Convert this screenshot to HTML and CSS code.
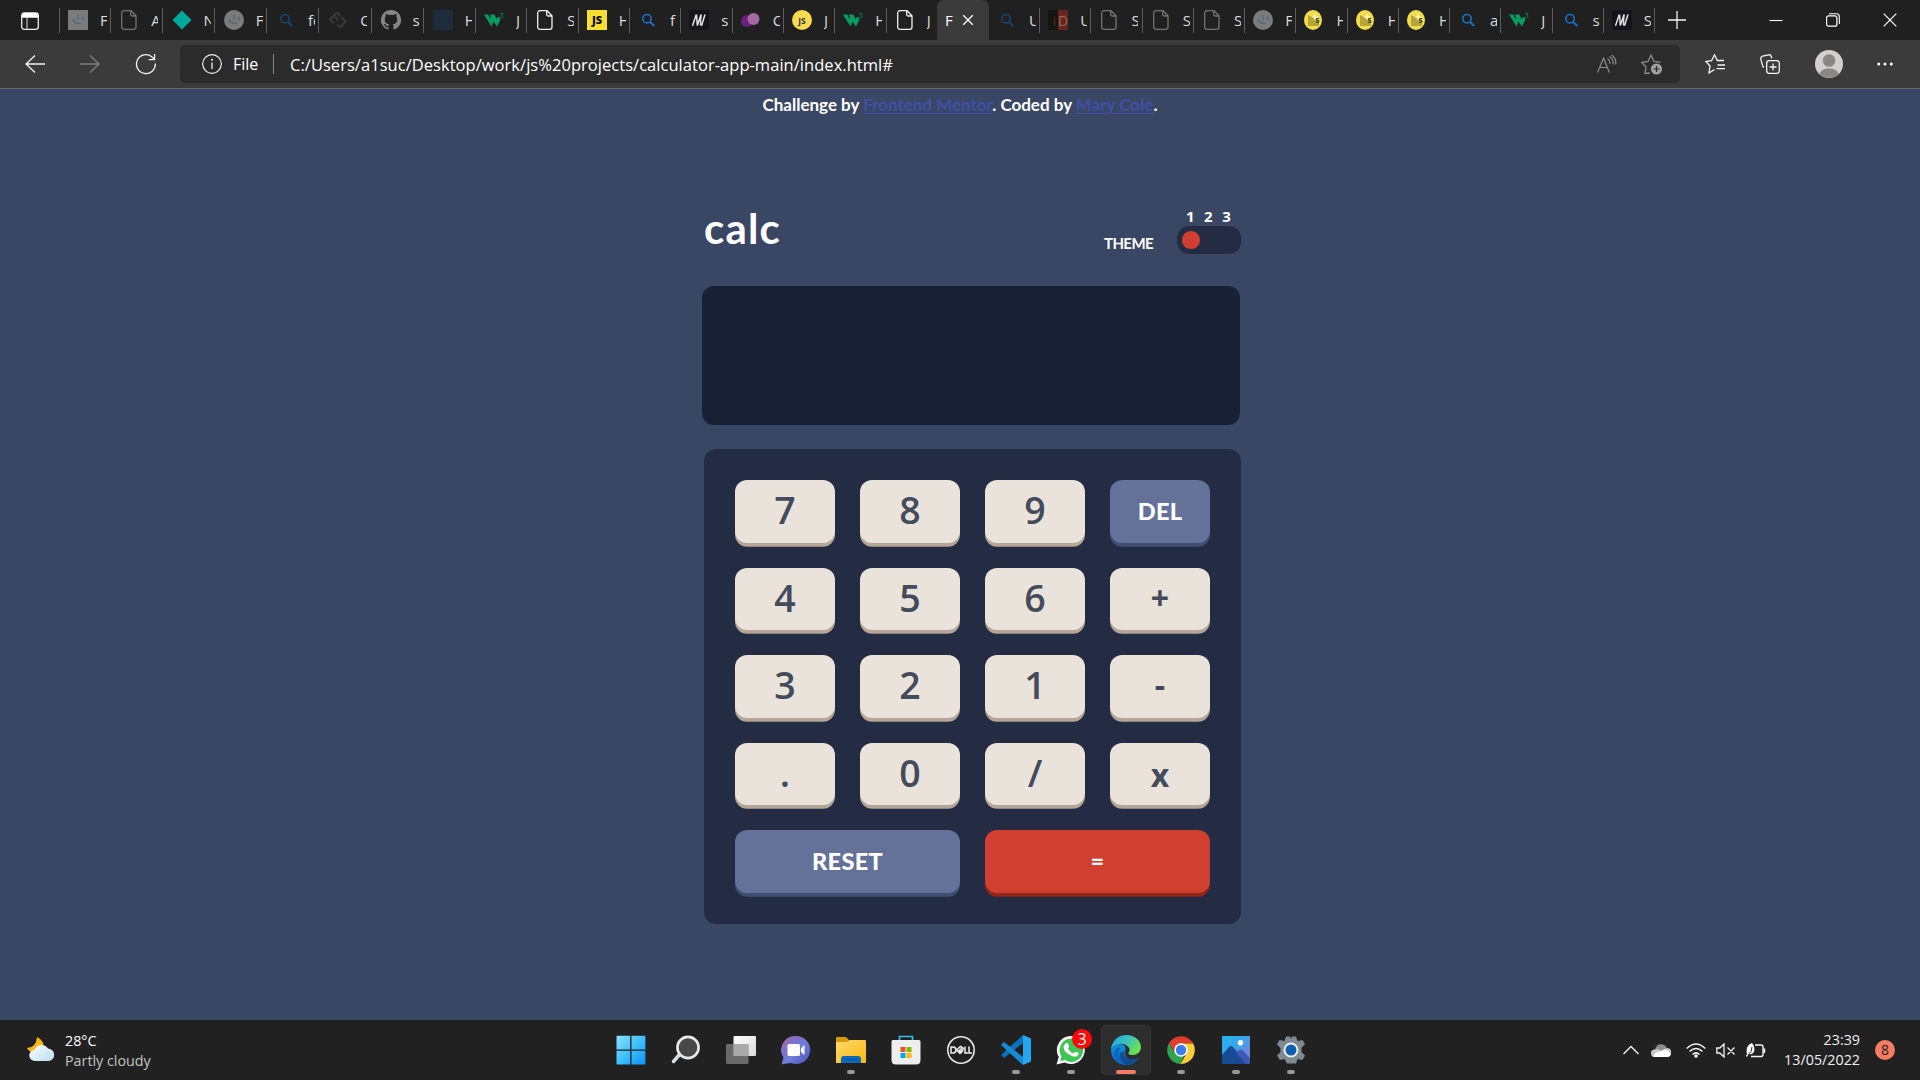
FILE: index.html
```
<!DOCTYPE html>
<html lang="en">
<head>
<meta charset="utf-8">
<title>Frontend Mentor | Calculator app</title>
<link rel="stylesheet" href="styles.css">
</head>
<body>
<svg class="defs" width="0" height="0" aria-hidden="true">
  <defs>
    <linearGradient id="g-win" x1="0" y1="0" x2="1" y2="1"><stop offset="0" stop-color="#8be2ff"/><stop offset=".5" stop-color="#3fc0fb"/><stop offset="1" stop-color="#0a94f5"/></linearGradient>
    <linearGradient id="g-chat" x1="0" y1="0" x2="1" y2="1"><stop offset="0" stop-color="#b0689c"/><stop offset=".35" stop-color="#7a72cf"/><stop offset=".55" stop-color="#6d80dc"/><stop offset="1" stop-color="#4a4bb8"/></linearGradient>
    <linearGradient id="g-folder" x1="0" y1="0" x2="1" y2="1"><stop offset="0" stop-color="#ffd96a"/><stop offset="1" stop-color="#fcb912"/></linearGradient>
    <linearGradient id="g-view" x1="0" y1="0" x2="1" y2="1"><stop offset="0" stop-color="#fff"/><stop offset="1" stop-color="#d9d9d9"/></linearGradient>
    <linearGradient id="g-edge1" x1="0" y1="0" x2="1" y2=".5"><stop offset="0" stop-color="#239cd8"/><stop offset=".5" stop-color="#35c1c8"/><stop offset="1" stop-color="#6be04c"/></linearGradient>
    <linearGradient id="g-edge2" x1="0" y1="0" x2="0" y2="1"><stop offset="0" stop-color="#0e8fd8"/><stop offset="1" stop-color="#1767c4"/></linearGradient>
    <linearGradient id="g-photo" x1="0" y1="0" x2="1" y2="1"><stop offset="0" stop-color="#22b3ee"/><stop offset=".45" stop-color="#3ba4ea"/><stop offset="1" stop-color="#9a6cd0"/></linearGradient>
    <linearGradient id="g-cloud" x1="0" y1="0" x2="1" y2="1"><stop offset="0" stop-color="#fafdff"/><stop offset="1" stop-color="#b9ddf2"/></linearGradient>
    <symbol id="i-page" viewBox="0 0 20 20"><path d="M4 .7h8l5 5V17a2.300 2.300 0 0 1-2.300 2.300H5A2.300 2.300 0 0 1 2.700 17V3A2.300 2.300 0 0 1 5 .7M11.700 1v3.500A1.500 1.500 0 0 0 13.200 6H17" fill="none" stroke="currentColor" stroke-width="1.300"/></symbol>
    <symbol id="i-find" viewBox="0 0 20 20"><circle cx="9" cy="8.700" r="4.200" fill="none" stroke="currentColor" stroke-width="1.600"/><path d="M12 12l4.300 4" stroke="currentColor" stroke-width="2"/></symbol>
    <symbol id="i-w3" viewBox="0 0 20 20"><path d="M0 4.500h4.300l2 4.500L7 7.500 6 4.500h4.300l2.200 4.500 1.500-2h2l-.5 1.500 1 1L13 16.500 9.500 11.500 7.500 16.500z" fill="#059c66"/><path d="M16.200 3.500h2.800l-1.500 1.700q1.800.2 1.300 1.800-.7 1.500-2.800.7" fill="none" stroke="#087a50" stroke-width="1"/></symbol>
    <symbol id="i-js" viewBox="0 0 20 20"><path d="M0 0h20v20H0z" fill="#f8df31"/><text x="10" y="14" text-anchor="middle" class="fav-js">JS</text></symbol>
    <symbol id="i-jsc" viewBox="0 0 20 20"><circle cx="10" cy="10" r="10" fill="#f8da50"/><text x="10" y="13.500" text-anchor="middle" class="fav-jsc">JS</text></symbol>
    <symbol id="i-m" viewBox="0 0 20 20"><path d="M0 0h20v20H0z" fill="#15141a"/><path d="M3.500 15.700L7.300 4.500M7.500 4.500L8.300 15.500 12 4.500M12.200 4.500q-1 6-.7 11M12.500 15.700L16 4.500" fill="none" stroke="#e2e2e4" stroke-width="1.500"/></symbol>
    <symbol id="i-face" viewBox="0 0 20 20"><circle cx="10" cy="10" r="10" fill="#7b7b7b"/><path d="M5 9q1 5 8 4.500M10 5v5M16 7l-2 1.500 2 1.500" fill="none" stroke="#56677a" stroke-width="1.300"/></symbol>
    <symbol id="i-yellow" viewBox="0 0 20 20"><ellipse cx="9" cy="10" rx="9" ry="10" fill="#f0dc4c"/><path d="M4 5l11 6v5H4z" fill="#b5a638"/><path d="M11 4v6M8.500 7H14" stroke="#fff8c8" stroke-width="1.300"/><text x="11.500" y="13" class="fav-s">s</text></symbol>
  </defs>
</svg>

<header class="tabstrip">
  <div class="tab-actions"><svg width="18" height="18" viewBox="0 0 18 18"><rect x=".7" y=".9" width="16.600" height="16.400" rx="2.500" fill="none" stroke="#eee" stroke-width="1.300"/><path d="M1 4Q1 1 4 1h10q3 0 3 3v1.700H1z" fill="#fff"/><path d="M6 5v12" stroke="#ddd"/></svg></div>
  <div class="tabs group-a">
    <div class="tab"><svg><path d="M0 0h20v20H0z" fill="#7b7b7b"/><path d="M5 9q1 5 8 4.500M10 5v5M16 7l-2 1.500 2 1.500" fill="none" stroke="#56677a" stroke-width="1.300"/></svg><span>F</span></div>
    <div class="tab dim"><svg><use href="#i-page"/></svg><span>A</span></div>
    <div class="tab"><svg><path d="M10 .5l9.500 9.500-9.500 9.500L.5 10z" fill="#00a99d"/></svg><span>N</span></div>
    <div class="tab"><svg><use href="#i-face"/></svg><span>F</span></div>
    <div class="tab navy"><svg><use href="#i-find"/></svg><span>fo</span></div>
    <div class="tab"><svg><path d="M9 2.500L2 9.500l4 4M12 17.500l5.500-6-4.500-4.500M7 7l3.500 3.500M9 2.500l3 3M9 14.500l3 3" fill="none" stroke="#3a3a3a" stroke-width="2"/></svg><span>C</span></div>
    <div class="tab"><svg><path fill="#868686" d="M10 0a10 10 0 0 0-3.200 19.500c.5.100.7-.2.700-.5v-1.800c-2.800.6-3.400-1.300-3.400-1.300-.4-1.200-1.100-1.500-1.100-1.500-.9-.6.100-.6.100-.6 1 .1 1.500 1 1.500 1 .9 1.600 2.400 1.100 3 .9.100-.7.400-1.100.6-1.400-2.200-.3-4.500-1.100-4.500-5 0-1.100.4-2 1-2.700-.1-.2-.4-1.200.1-2.600 0 0 .8-.3 2.700 1a9.400 9.400 0 0 1 5 0c1.900-1.300 2.700-1 2.700-1 .5 1.400.2 2.400.1 2.600.6.700 1 1.600 1 2.700 0 3.900-2.300 4.700-4.500 5 .4.300.7.900.7 1.900V19c0 .3.200.6.700.5A10 10 0 0 0 10 0z"/></svg><span>s</span></div>
    <div class="tab"><svg><path d="M0 0h20v20H0z" fill="#1f2a3b"/></svg><span>H</span></div>
  </div>
  <div class="tabs group-b">
    <div class="tab"><svg><use href="#i-w3"/></svg><span>J</span></div>
    <div class="tab"><svg><use href="#i-page"/></svg><span>S</span></div>
    <div class="tab"><svg><use href="#i-js"/></svg><span>H</span></div>
    <div class="tab blue"><svg><use href="#i-find"/></svg><span>f</span></div>
    <div class="tab"><svg><use href="#i-m"/></svg><span>s</span></div>
    <div class="tab"><svg><circle cx="6" cy="11" r="6" fill="#68217a"/><circle cx="12.500" cy="9" r="6" fill="#a66aa3"/></svg><span>C</span></div>
    <div class="tab"><svg><use href="#i-jsc"/></svg><span>J</span></div>
    <div class="tab"><svg><use href="#i-w3"/></svg><span>H</span></div>
    <div class="tab last"><svg><use href="#i-page"/></svg><span>J</span></div>
  </div>
  <div class="active-tab"><span>F</span><svg width="10" height="10" viewBox="0 0 10 10"><path d="M0 0l10 10M10 0L0 10" stroke="#fff" stroke-width="1.300"/></svg></div>
  <div class="tabs group-c">
    <div class="tab navy"><svg><use href="#i-find"/></svg><span>U</span></div>
    <div class="tab"><svg><path d="M0 0h10v20H0z" fill="#141414"/><path d="M10 0h10v20H10z" fill="#67261b"/><text x="4.500" y="15.500" class="fav-id">i</text><text x="10" y="15.500" class="fav-d">D</text></svg><span>U</span></div>
    <div class="tab dim"><svg><use href="#i-page"/></svg><span>S</span></div>
    <div class="tab dim"><svg><use href="#i-page"/></svg><span>S</span></div>
    <div class="tab dim"><svg><use href="#i-page"/></svg><span>S</span></div>
    <div class="tab"><svg><use href="#i-face"/></svg><span>F</span></div>
    <div class="tab"><svg><use href="#i-yellow"/></svg><span>H</span></div>
    <div class="tab"><svg><use href="#i-yellow"/></svg><span>H</span></div>
    <div class="tab"><svg><use href="#i-yellow"/></svg><span>H</span></div>
    <div class="tab blue"><svg><use href="#i-find"/></svg><span>a</span></div>
    <div class="tab"><svg><use href="#i-w3"/></svg><span>J</span></div>
    <div class="tab blue"><svg><use href="#i-find"/></svg><span>s</span></div>
    <div class="tab"><svg><use href="#i-m"/></svg><span>S</span></div>
  </div>
  <svg class="new-tab" width="18" height="18" viewBox="0 0 18 18"><path d="M9 0v18M0 9h18" stroke="#f2f2f2" stroke-width="1.300"/></svg>
  <div class="window-buttons">
    <svg width="14" height="14" viewBox="0 0 14 14"><path d="M.5 7.500h13" stroke="#fff" stroke-width="1.100"/></svg>
    <svg width="14" height="14" viewBox="0 0 14 14"><rect x=".6" y="2.900" width="10.300" height="10.300" rx="2" fill="none" stroke="#fff" stroke-width="1.200"/><path d="M3 .7h7.500q2.800 0 2.800 2.800V11" fill="none" stroke="#fff" stroke-width="1.100"/></svg>
    <svg width="14" height="14" viewBox="0 0 14 14"><path d="M.7.7l12.600 12.600M13.300.7L.7 13.300" stroke="#fff" stroke-width="1.200"/></svg>
  </div>
</header>

<nav class="toolbar">
  <div class="nav-buttons">
    <svg width="20" height="20" viewBox="0 0 20 20"><path d="M20 10H1M10 1.500L1 10l9 8.500" fill="none" stroke="#f4f4f4" stroke-width="1.300"/></svg>
    <svg width="20" height="20" viewBox="0 0 20 20"><path d="M0 10h19M10 1.500l9 8.500-9 8.500" fill="none" stroke="#7e7e7e" stroke-width="1.300"/></svg>
    <svg width="22" height="22" viewBox="0 0 22 22"><path d="M20.300 10.500a9.400 9.400 0 1 1-3.500-6.700L19.500 6.500M19.600 1v5.700h-5.800" fill="none" stroke="#f4f4f4" stroke-width="1.300"/></svg>
  </div>
  <div class="address">
    <svg width="20" height="20" viewBox="0 0 20 20"><circle cx="10" cy="10" r="9.300" fill="none" stroke="#f0f0f0" stroke-width="1.200"/><path d="M10 8.500V15" stroke="#f0f0f0" stroke-width="1.300"/><circle cx="10" cy="5.800" r="1" fill="#f0f0f0"/></svg>
    <span class="scheme">File</span><i class="bar"></i><span class="url">C:/Users/a1suc/Desktop/work/js%20projects/calculator-app-main/index.html#</span>
    <svg class="read" width="20" height="18" viewBox="0 0 20 18"><path d="M.6 17.500L6.500 3l5.900 14.500M2.800 12.500h7.500M10.500 3.500q3 2 2.500 5.500M12.500 1.500q4.500 3 3.500 8M14.500 0q5.500 4 4 9.500" fill="none" stroke="#8c8c8c" stroke-width="1.200"/></svg>
    <svg width="22" height="21" viewBox="0 0 22 21"><path d="M9 19l-5 .5 1-6.500L.8 8.500l6.200-1L10 1.200l3 6.300 6.500.8" fill="none" stroke="#8c8c8c" stroke-width="1.300"/><circle cx="15.500" cy="15" r="5.600" fill="#a0a0a0"/><path d="M15.500 12v6M12.500 15h6" stroke="#2b2b2b" stroke-width="1.200"/></svg>
  </div>
  <div class="tool-buttons">
    <svg width="20" height="20" viewBox="0 0 20 20"><path d="M9.500 15.500L4 19l1-7L.8 7.500l5.700-.8L9.500.8l2.800 5.700H19M12.500 11H20M11.500 14.700H20" fill="none" stroke="#f4f4f4" stroke-width="1.300"/></svg>
    <svg width="20" height="20" viewBox="0 0 20 20"><rect x="6.700" y="6.700" width="12.600" height="12.600" rx="2.500" fill="none" stroke="#f4f4f4" stroke-width="1.300"/><path d="M13 9.500v7M9.500 13h7M4 13.500q-1.500-1-1.700-3L.8 5.200Q.4 3 2.500 2.200L8.500.8q2-.4 2.700 1.500l.6 2" fill="none" stroke="#f4f4f4" stroke-width="1.300"/></svg>
    <svg width="28" height="28" viewBox="0 0 28 28"><circle cx="14" cy="14" r="14" fill="#d2d0ce"/><circle cx="14" cy="10.500" r="6.300" fill="#8a8886"/><path d="M4.500 24Q6 18.500 14 18.500t9.500 5.500A14 14 0 0 1 4.500 24z" fill="#8a8886"/></svg>
    <svg width="16" height="4" viewBox="0 0 16 4"><g fill="#fff"><circle cx="1.700" cy="2" r="1.500"/><circle cx="8" cy="2" r="1.500"/><circle cx="14.300" cy="2" r="1.500"/></g></svg>
  </div>
</nav>

<main class="page">
  <p class="attribution">Challenge by <a href="#">Frontend Mentor</a>. Coded by <a href="#">Mary Cole</a>.</p>
  <section class="calculator">
    <div class="top">
      <h1>calc</h1>
      <span class="theme">THEME</span>
      <div class="switch">
        <div class="numbers"><span>1</span><span>2</span><span>3</span></div>
        <div class="toggle"><i></i></div>
      </div>
    </div>
    <div class="display"></div>
    <div class="keypad">
      <div class="key">7</div><div class="key">8</div><div class="key">9</div><div class="key word blue-key">DEL</div>
      <div class="key">4</div><div class="key">5</div><div class="key">6</div><div class="key plus">+</div>
      <div class="key">3</div><div class="key">2</div><div class="key">1</div><div class="key minus">-</div>
      <div class="key">.</div><div class="key">0</div><div class="key slash">/</div><div class="key times">x</div>
      <div class="key word wide blue-key">RESET</div><div class="key word wide red-key">=</div>
    </div>
  </section>
</main>

<footer class="taskbar">
  <div class="weather">
    <svg width="28" height="26" viewBox="0 0 28 26"><path d="M10 1Q18 5 16 12L7 17Q2 16 0 12 9 12 10 1z" fill="#f9b913"/><path d="M8 25a5.500 5.500 0 0 1-.5-11 7.500 7.500 0 0 1 13.500-1.500A6.300 6.300 0 0 1 22 25z" fill="url(#g-cloud)"/></svg>
    <div><span class="temp">28°C</span><span class="sky">Partly cloudy</span></div>
  </div>
  <div class="apps">
    <div class="app"><svg width="30" height="30" viewBox="0 0 30 30"><path d="M.5 1.500q0-.8.800-.8H14.200v13.700H.5zM15.500.7h13q.9 0 .9.800v12.900H15.500zM.5 15.700h13.700v13.700H1.300q-.8 0-.8-.9zM15.500 15.700h13.900v12.800q0 .9-.9.900h-13z" fill="url(#g-win)"/></svg></div>
    <div class="app"><svg width="30" height="30" viewBox="0 0 30 30"><path d="M9 19l-6.500 7.500" stroke="#d9dcde" stroke-width="3.500" stroke-linecap="round"/><circle cx="17" cy="12.500" r="10.600" fill="#484848" stroke="#e6e8ea" stroke-width="2.600"/></svg></div>
    <div class="app"><svg width="30" height="30" viewBox="0 0 30 30"><rect x="7.500" y="1" width="22.500" height="20" rx="1" fill="url(#g-view)"/><rect x="0" y="9" width="22.500" height="20" rx="1" fill="#777" opacity=".85"/><path d="M7.500 9h15v12h-15z" fill="#aaa"/></svg></div>
    <div class="app"><svg width="30" height="30" viewBox="0 0 30 30"><path d="M15 1a14 14 0 1 1-5 27L.5 29.200l2-6.500A14 14 0 0 1 15 1z" fill="url(#g-chat)"/><rect x="6.500" y="9" width="12.500" height="12" rx="1.500" fill="#fff"/><path d="M20 13.500l3.500-3.500v10L20 17z" fill="#fff"/></svg></div>
    <div class="app"><svg width="30" height="30" viewBox="0 0 30 30"><path d="M0 3q0-1 1-1h9l3.500 3.500H29V12H0z" fill="#d9980a"/><path d="M0 7h10.500L14 5h15q1 0 1 1v21q0 1-1 1H0z" fill="url(#g-folder)"/><path d="M5 28v-4q0-3 3-3h14q3 0 3 3v4z" fill="#0b69bd"/><path d="M9 24.700h12" stroke="#084b8a"/></svg><i class="run"></i></div>
    <div class="app"><svg width="30" height="30" viewBox="0 0 30 30"><path d="M8.500 6V1.500h13V6" fill="none" stroke="#2ec0ee" stroke-width="1.700"/><path d="M.5 6.500Q.5 5 2 5h26q1.500 0 1.500 1.500V25q0 4.500-4.500 4.500H5Q.5 29.500.5 25z" fill="#eee"/><path d="M9.500 12h5v5h-5z" fill="#f25022"/><path d="M15.500 12h5v5h-5z" fill="#7fba00"/><path d="M9.500 18h5v5h-5z" fill="#00a4ef"/><path d="M15.500 18h5v5h-5z" fill="#ffb900"/></svg></div>
    <div class="app"><svg width="30" height="30" viewBox="0 0 30 30"><circle cx="15" cy="15" r="13.200" fill="none" stroke="#e7e7e7" stroke-width="1.600"/><path d="M5 12v6h2q3-.2 3-3t-3-3zM10.500 15l4-3.500 2 1.200-3.500 3 1 1.300 4-3.500M11 15.500l3 3 3-2.500M19 11.500V18h3M23 11.500V18h3" fill="none" stroke="#eee" stroke-width="1.500"/></svg></div>
    <div class="app"><svg width="30" height="30" viewBox="0 0 30 30"><path d="M22 0v8L3 23l-3-3z" fill="#0b72b9"/><path d="M22 30v-8L3 7 0 10z" fill="#168cd8"/><path d="M22 0l8 3.500v23L22 30z" fill="#27a6f0"/></svg><i class="run"></i></div>
    <div class="app"><svg width="30" height="30" viewBox="0 0 30 30"><path d="M15 1a14 14 0 1 1-6.500 26.500L.5 29.500l2.300-7.500A14 14 0 0 1 15 1z" fill="#fff"/><path d="M15 3.500A11.700 11.700 0 1 1 9 25l-5 1.300L5.500 21.500A11.700 11.700 0 0 1 15 3.500z" fill="#3dc556"/><path d="M9.500 8.500q2-1.500 3 1l.7 2q0 1-1.200 2 2 4 5.500 5l1.500-1.700q1-.5 3.500 1.200.5 1-.7 2.500-2 2-5.800.5-8-3-8.500-9 0-2 2-3.500z" fill="#fff"/></svg><b class="badge">3</b><i class="run"></i></div>
    <div class="app current"><svg width="30" height="30" viewBox="0 0 30 30"><path d="M0 15C0 10 6 8.500 11 9.500c4 1 4 4 3 7-1 6 6 10.500 13.500 6.500C25 27 20.500 30 15 30 6 30 0 23 0 15z" fill="url(#g-edge2)"/><path d="M9 12q-4 10 6 18-9-1-11.500-9Q2 14 9 12z" fill="#0a67c0"/><path d="M13 16.500q-1 7.500 8 8 4 0 7-2Q24 30 15.500 30 8 26 9 18z" fill="#124b92"/><path d="M0 14C1 6 7 0 15 0c9 0 15 6 15 12 0 5-4 8-8.500 8-3 0-4.500-1-4-2.300Q20 15 17 11.500 13.500 8 8 9 2 10 0 14z" fill="url(#g-edge1)"/></svg><i class="run"></i></div>
    <div class="app"><svg width="28" height="28" viewBox="0 0 28 28"><path d="M2 7A14 14 0 0 1 26.200 7.500H14l-6 9.500z" fill="#e23b30"/><path d="M2 7l6 10.500 9 3L13.500 28A14 14 0 0 1 2 7z" fill="#31a350"/><path d="M14 7.500h12.200A14 14 0 0 1 13.500 28l6-10.500z" fill="#fdce37"/><circle cx="14" cy="14" r="6.800" fill="#fff"/><circle cx="14" cy="14" r="5.200" fill="#3b7ded"/></svg><i class="run"></i></div>
    <div class="app"><svg width="28" height="28" viewBox="0 0 28 28"><path d="M0 0h28v28H0z" fill="url(#g-photo)"/><path d="M0 19l7-8q2-2 4 0l15 17H0z" fill="#154c93"/><path d="M14 17l3.500-3q1.500-1 3 0L28 22v6h-4z" fill="#3f58b4"/><circle cx="18.500" cy="6.700" r="2.800" fill="#eef8ff"/></svg><i class="run"></i></div>
    <div class="app"><svg width="30" height="30" viewBox="0 0 30 30"><path d="M11 1.500h3l1 2.500 1-2.500h4l1.500 4.500 5-1 2.500 4-3.500 4v4l3.500 3.500-2.500 4.500-5-1-1.500 4.500h-9L8.500 24l-4.500 1L1 20.500 4.500 17v-4L1 9.500 3.500 5l5 1L10 1.500z" fill="#7f8992"/><circle cx="15" cy="15" r="6.500" fill="#0c60ae" stroke="#edf0f2" stroke-width="2"/></svg><i class="run"></i></div>
  </div>
  <div class="tray">
    <svg width="16" height="10" viewBox="0 0 16 10"><path d="M.5 9L8 1.500 15.500 9" fill="none" stroke="#f0f0f0" stroke-width="1.400"/></svg>
    <svg width="20" height="13" viewBox="0 0 20 13"><path d="M4 6Q5 .3 10 .3q4 0 6 4L13 9z" fill="#8f8f8f"/><path d="M4 13A3.500 3.500 0 0 1 3.500 5.500Q6.500 4 10 7l6-3a4.300 4.300 0 0 1 0 9z" fill="#c9c9c9"/><path d="M2 12q2-4 8-5 4-3 7 0 3 2 2.500 4-1 2-3.500 2H4q-1.500 0-2-1z" fill="#fff"/></svg>
    <svg width="20" height="15" viewBox="0 0 20 15"><path d="M.7 5.500q9.300-9 18.600 0M3.600 8.500q6.400-6 12.800 0M6.500 11.500q3.500-3.200 7 0" fill="none" stroke="#f4f4f4" stroke-width="1.500"/><circle cx="10" cy="13" r="1.800" fill="#fff"/></svg>
    <svg width="20" height="15" viewBox="0 0 20 15"><path d="M.8 5h3L8 1v13l-4.200-4h-3zM11.500 4.500l7 7M18.500 4.500l-7 7" fill="none" stroke="#f4f4f4" stroke-width="1.300"/></svg>
    <svg width="20" height="15" viewBox="0 0 20 15"><path d="M9 2h6q2 0 2 2v7.500q0 2-2 2H5M18.500 5.500v4.500" fill="none" stroke="#f4f4f4" stroke-width="1.400"/><path d="M6 0q3.500 4 2 9-2 3-5.500 2L1 14 0 13l1-2Q-1 3 6 0z" fill="#fff"/><path d="M2 12Q6 9 6 4" fill="none" stroke="#222"/></svg>
    <div class="clock"><span>23:39</span><span>13/05/2022</span></div>
    <b class="notice">8</b>
  </div>
</footer>
</body>
</html>
```
FILE: styles.css
```
* { box-sizing: border-box; }
body {
  margin: 0;
  width: 1920px;
  height: 1080px;
  overflow: hidden;
  display: flex;
  flex-direction: column;
  background: #3a4764;
  color: #fff;
  font-family: "Open Sans", "Noto Sans", sans-serif;
}
svg { flex: none; display: block; }
.defs { position: absolute; }

/* tab strip */
.tabstrip { height: 40px; flex: none; display: flex; background: #202020; align-items: center; }
.tab-actions { width: 60px; height: 25px; padding: 4px 0 0 21px; border-right: 1px solid #5c5c5c; }
.tabs { display: flex; height: 40px; align-items: center; }
.tab {
  flex: 1 1 0;
  min-width: 0;
  height: 25px;
  display: flex;
  align-items: center;
  padding-left: 8px;
  border-right: 1px solid #5c5c5c;
  font-size: 15px;
  color: #f0f0f0;
}
.tab.last { border-right: 0; }
.tab svg { width: 20px; height: 20px; }
.tab span { margin-left: 12px; width: 7px; overflow: hidden; white-space: nowrap; color: #dcdcdc; }
.tab.dim svg { color: #737373; }
.tab.navy svg { color: #1b456d; }
.tab.blue svg { color: #1673c8; }
.group-a { width: 416px; }
.group-a .tab:nth-child(n+3) { padding-left: 9px; }
.group-b { width: 461px; }
.group-c { width: 666px; }
.active-tab {
  width: 52px;
  height: 40px;
  display: flex;
  align-items: center;
  gap: 10px;
  padding-left: 8px;
  background: #3b3b3b;
  border-radius: 7px 7px 0 0;
  font-size: 15px;
}
.fav-js { font: 800 11px "Open Sans", sans-serif; fill: #111; }
.fav-jsc { font: 700 8.500px "Open Sans", sans-serif; fill: #333; }
.fav-s { font: 700 8px "Open Sans", sans-serif; fill: #3d3710; }
.fav-id { font: 15px "Open Sans", sans-serif; fill: #5c2318; }
.fav-d { font: 14px "Open Sans", sans-serif; fill: #8d6a62; }
.new-tab { margin-left: 13px; }
.window-buttons { display: flex; gap: 43px; margin-left: 83px; }

/* toolbar */
.toolbar { height: 49px; flex: none; display: flex; align-items: center; background: #3b3b3b; border-bottom: 1px solid #686868; }
.nav-buttons { width: 180px; display: flex; align-items: center; gap: 35px; padding-left: 25px; }
.address {
  width: 1500px;
  height: 38px;
  display: flex;
  align-items: center;
  padding: 0 17px 0 22px;
  background: #2b2b2b;
  border-radius: 5px;
  font-size: 16px;
}
.scheme { margin-left: 11px; width: 28px; }
.bar { width: 1px; height: 20px; margin: 0 16px 0 12px; background: #888; }
.url { white-space: nowrap; font-size: 16.500px; letter-spacing: .04px; flex: 1; }
.read { margin-right: 24px; }
.tool-buttons { display: flex; align-items: center; padding-left: 25px; }
.tool-buttons svg + svg { margin-left: 35px; }
.tool-buttons svg:nth-child(n+3) { margin-left: 34.500px; }

/* page */
.page { flex: 1; display: flex; flex-direction: column; align-items: center; font-family: Lato, "Open Sans", sans-serif; font-weight: 700; }
.attribution { margin: 4px 0 0; height: 24px; line-height: 24px; font-size: 17px; white-space: nowrap; }
.attribution a { color: #3e50a5; text-underline-offset: 2px; text-decoration-thickness: 1px; }
.calculator { width: 539px; margin: 84px 0 0 23px; }
.top { height: 85px; display: flex; padding-left: 2px; }
h1 { margin: 0; width: 400px; font-size: 42px; line-height: 54px; letter-spacing: 1.200px; }
.theme { width: 73px; font-size: 15px; line-height: 20px; padding-top: 32px; letter-spacing: -.6px; }
.switch { width: 64px; padding-top: 8px; }
.numbers { height: 17px; display: flex; gap: 9.500px; padding-left: 9px; font: 700 15px/15px "Open Sans", sans-serif; }
.toggle { height: 28px; padding: 5px; border-radius: 12px; background: #242c44; }
.toggle i { display: block; width: 17.500px; height: 17.500px; border-radius: 50%; background: #d03f2f; }
.display { width: 538px; height: 139px; background: #182033; border-radius: 12px; }
.keypad {
  width: 537px;
  height: 475px;
  margin: 24px 0 0 2px;
  padding: 31px;
  display: grid;
  grid-template-columns: repeat(4, 100px);
  grid-auto-rows: 62.500px;
  gap: 25px;
  background: #242c44;
  border-radius: 12px;
}
.key {
  background: #eae3dc;
  color: #444b5a;
  border-radius: 12px;
  box-shadow: 0 3.750px 0 #b4a597;
  font: 600 37.500px/60px "Open Sans", sans-serif;
  text-align: center;
}
.word { font: 900 23.500px/62px Lato, sans-serif; color: #fff; letter-spacing: .3px; }
.wide { grid-column: span 2; }
.blue-key { background: #647198; box-shadow: 0 3.750px 0 #404e72; }
.red-key { background: #d03f2f; box-shadow: 0 3.750px 0 #93261a; }
.plus, .minus, .times { font-size: 32px; font-weight: 700; }
.times { line-height: 64px; }

/* taskbar */
.taskbar { height: 60px; flex: none; display: flex; background: #212121; font-size: 14.300px; }
.weather { width: 603px; display: flex; padding: 16px 0 0 27px; gap: 10px; }
.weather span { display: block; line-height: 20px; white-space: nowrap; }
.weather div { margin-top: -5px; }
.sky { color: #c3c3c3; }
.apps { display: flex; }
.app { position: relative; width: 55px; height: 60px; display: flex; align-items: center; justify-content: center; }
.run { position: absolute; left: 24px; top: 50px; width: 8px; height: 4px; border-radius: 2px; background: #989898; }
.current { width: 50px; height: 50px; margin: 5px 2px 5px 3px; border-radius: 5px; background: #2d2d2d; box-shadow: inset 0 0 0 1px #363636; }
.current .run { left: 15px; top: 45px; width: 20px; background: #f47c64; }
.badge { position: absolute; left: 29px; top: 9px; width: 20px; height: 20px; border-radius: 50%; background: #fb0a0a; font: 16px/20px "Open Sans", sans-serif; text-align: center; }
.tray { flex: 1; display: flex; align-items: center; padding-left: 305px; }
.tray svg:nth-child(2) { margin-left: 12px; }
.tray svg:nth-child(3) { margin-left: 15px; }
.tray svg:nth-child(n+4) { margin-left: 10px; }
.clock { width: 94px; text-align: right; color: #f0f0f0; }
.clock span { display: block; line-height: 20px; }
.notice { margin-left: 15px; width: 20px; height: 20px; border-radius: 50%; background: #f47c64; color: #222; font: 14px/20px "Open Sans", sans-serif; text-align: center; }
```
